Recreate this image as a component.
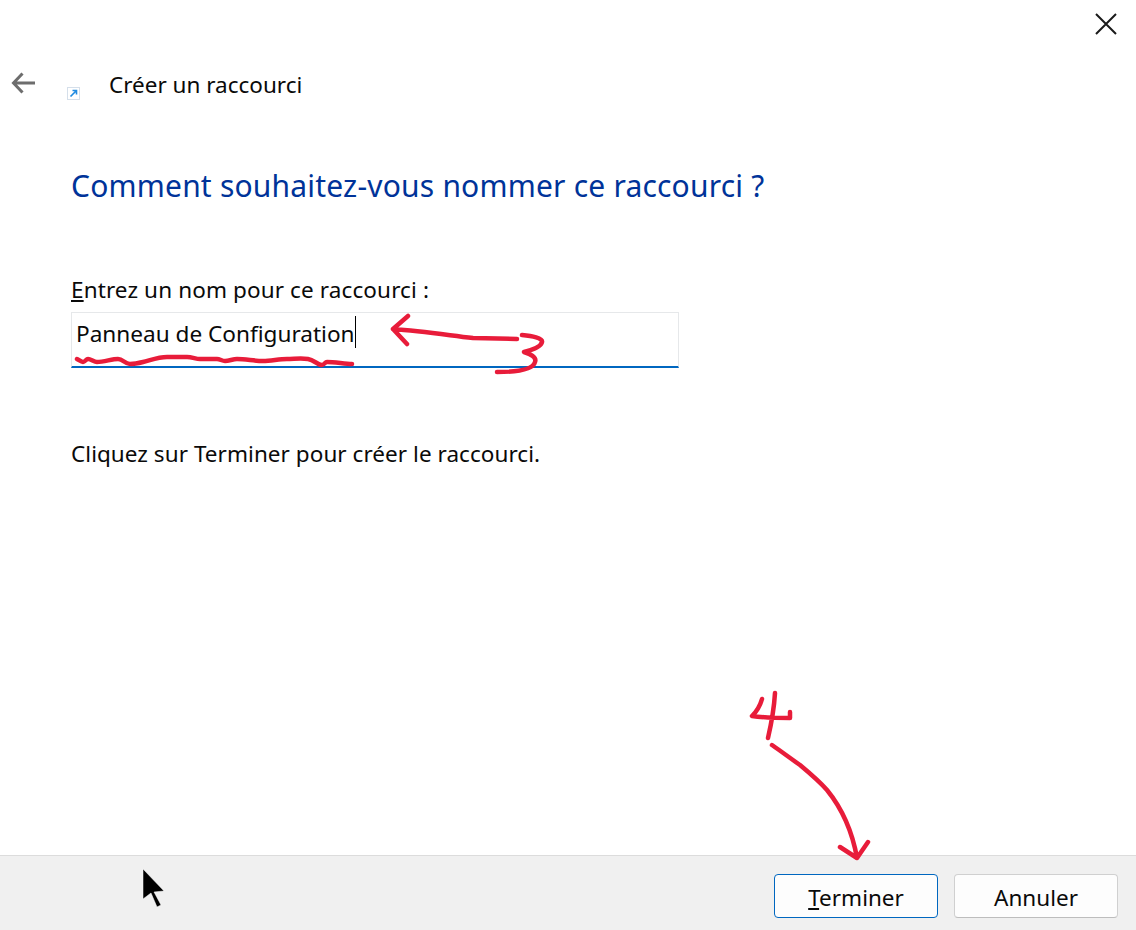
<div class="dialog">
  <div class="closebar">
    <button class="close" aria-label="Fermer">
      <svg width="22" height="22" viewBox="0 0 22 22"><path d="M1 1 L21 21 M21 1 L1 21" stroke="#1a1a1a" stroke-width="2" fill="none"/></svg>
    </button>
  </div>
  <header class="head">
    <svg class="back" width="26" height="22" viewBox="0 0 26 22"><path d="M24 11 H2.500 M11.500 1.500 L2.500 11 L11.500 20.500" stroke="#6d6d6d" stroke-width="3" fill="none"/></svg>
    <svg class="shortcut" width="13" height="13" viewBox="0 0 13 13">
      <rect x="0.500" y="0.500" width="12" height="12" fill="#fff" stroke="#d5dfea"/>
      <path d="M3.500 9.500 L9 4 M5.500 3.500 H9.500 V7.500" stroke="#1f8ae0" stroke-width="1.600" fill="none"/>
    </svg>
    <span class="wiz">Créer un raccourci</span>
  </header>
  <main class="body">
    <h1>Comment souhaitez-vous nommer ce raccourci ?</h1>
    <label class="lab" for="nm"><u>E</u>ntrez un nom pour ce raccourci :</label>
    <div class="field" id="nm"><span>Panneau de Configuration</span><i class="caret"></i></div>
    <p class="hint">Cliquez sur Terminer pour créer le raccourci.</p>
  </main>
  <footer class="foot">
    <button class="btn primary"><u>T</u>erminer</button>
    <button class="btn">Annuler</button>
  </footer>

  <svg class="ink" width="1136" height="930" viewBox="0 0 1136 930" aria-hidden="true">
    <g fill="none" stroke="#e81c3a" stroke-linecap="round" stroke-linejoin="round">
      <path stroke-width="4.500" d="M77 359 C79 360 81 362 83 362 C85 362 86 359 88 359 C91 359 94 362 97 362 C104 362 112 359 118 359 C123 359 125 364 130 364 C135 364 139 363 143 362 C151 360 159 357 167 357 C174 357 181 357 187 357 C192 357 196 359 200 359 L217 359 C220 359 222 361 225 361 C229 361 233 359 237 359 C246 359 254 361 263 361 C271 361 279 359 287 359 C294 359 301 358 308 359 C314 360 318 365 322 365 C324 365 325 362 327 362 C335 362 345 364 352 364"/>
      <path stroke-width="4.500" d="M408 316 L393 329 L407 344 M393 329 C420 331 440 334 473 338 L517 339"/>
      <path stroke-width="4.500" d="M522 335 C532 336 543 338 542 342 C541 347 532 350 524 352 C530 354 537 357 535 362 C533 371 510 372 497 372"/>
      <path stroke-width="4.500" d="M762 699 C760 706 756 712 752 716 C765 718 778 718 790 718 L790 712 M775 693 C774 710 771 725 768 738"/>
      <path stroke-width="4.500" d="M772 745 C782 752 790 758 800 765 C812 775 820 782 827 790 C840 806 852 830 857 858 M840 847 L857 858 L868 842"/>
    </g>
    <path d="M143 869 L143 899 L151 893 L157 907 L161 905 L154 892 L164 891 Z" fill="#000" stroke="#fff" stroke-width="0.500"/>
  </svg>
</div>

<style>
  :global(body) { margin: 0; background: #fff; }
  .dialog {
    position: relative;
    height: 930px;
    display: flex;
    flex-direction: column;
    font-family: "Noto Sans", "Open Sans", sans-serif;
    color: #0a0a0a;
    background: #fff;
    overflow: hidden;
  }
  .closebar { display: flex; justify-content: flex-end; height: 48px; }
  .close {
    width: 60px; height: 48px; border: 0; background: none; padding: 0;
    display: flex; align-items: center; justify-content: center;
  }
  .head { display: flex; align-items: center; height: 72px; margin-top: -1px; padding-left: 11px; }
  .back { flex: none; }
  .shortcut { margin-left: 30px; margin-top: 20px; flex: none; }
  .wiz { margin-left: 29px; margin-top: 4px; font-size: 22.500px; line-height: 30px; }
  .body { flex: 1; padding-left: 71px; }
  h1 { margin: 46px 0 0; font-size: 30px; line-height: 42px; font-weight: 400; color: #003399; letter-spacing: 0.200px; }
  .lab { display: block; margin-top: 68px; font-size: 22.500px; line-height: 30px; letter-spacing: 0.120px; }
  .field {
    box-sizing: border-box;
    margin-top: 7px;
    width: 608px; height: 56px;
    border: 1px solid #e6e8ea;
    border-bottom: 2px solid #0067c0;
    padding: 3px 0 0 4px;
    font-size: 22.600px;
    line-height: 36px;
    display: flex;
    align-items: flex-start;
  }
  .caret { width: 1px; height: 32px; background: #000; }
  .hint { margin: 71px 0 0; font-size: 22.500px; line-height: 30px; letter-spacing: 0.050px; }
  .foot {
    height: 75px;
    box-sizing: border-box;
    border-top: 1px solid #dcdcdc;
    background: #f0f0f0;
    display: flex;
    justify-content: flex-end;
    gap: 16px;
    padding: 18px 18px 0 0;
  }
  .btn {
    width: 164px; height: 44px;
    box-sizing: border-box;
    border: 1px solid #d0d0d0;
    border-bottom-color: #bdbdbd;
    border-radius: 4px;
    background: #fdfdfd;
    font: inherit;
    font-size: 22.500px;
    color: #0a0a0a;
    padding: 2px 0 0;
  }
  .primary { border-color: #0067c0; }
  .ink { position: absolute; left: 0; top: 0; pointer-events: none; }
</style>
